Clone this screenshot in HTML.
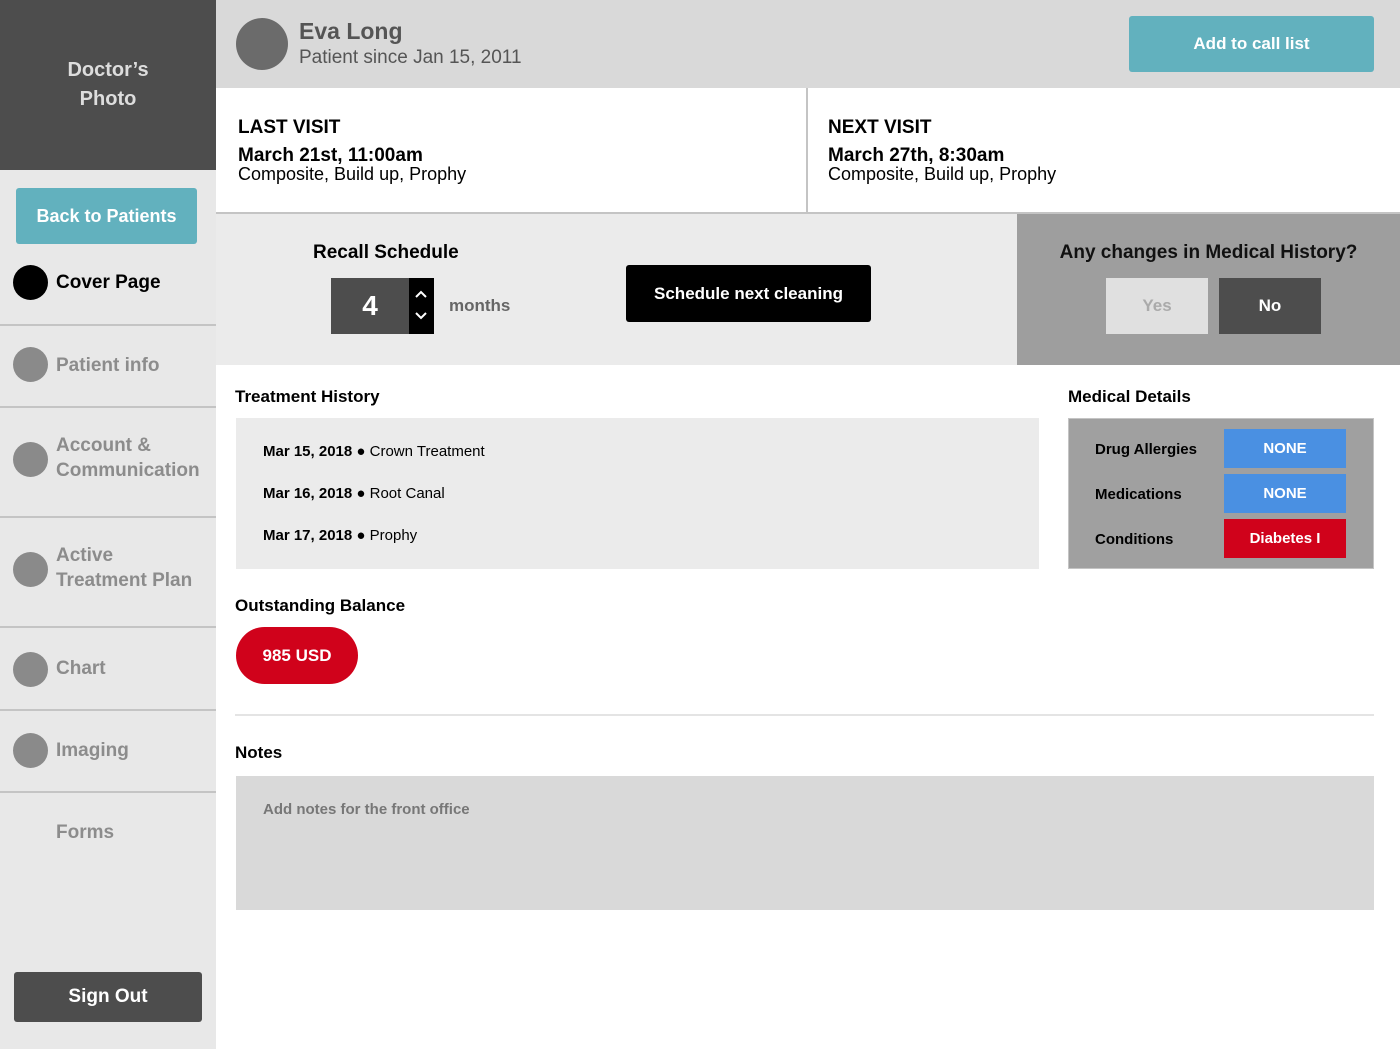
<!DOCTYPE html>
<html><head><meta charset="utf-8"><style>
*{margin:0;padding:0;box-sizing:border-box}
body{width:1400px;height:1049px;position:relative;background:#fff;font-family:"Liberation Sans",sans-serif;overflow:hidden}
.a{position:absolute}
.b{font-weight:bold}
.side{left:0;top:0;width:216px;height:1049px;background:#e8e8e8}
.nav{left:0;width:216px;border-top:2px solid #c4c4c4}
.dot{position:absolute;left:13px;width:35px;height:35px;border-radius:50%;background:#8a8a8a}
.nl{position:absolute;left:56px;color:#8c8c8c;font-weight:bold;font-size:19px;line-height:25px}
.c{display:flex;align-items:center;justify-content:center}
</style></head><body>
<div class="a side"></div>
<div class="a c b" style="left:0;top:0;width:216px;height:170px;background:#4d4d4d;color:#ddd;font-size:20px;line-height:29px;text-align:center">Doctor’s<br>Photo</div>
<div class="a c b" style="left:16px;top:188px;width:181px;height:56px;background:#62b1be;border-radius:3px;color:#fff;font-size:18px">Back to Patients</div>
<div class="dot" style="top:265px;background:#000"></div><div class="nl" style="top:270px;color:#000">Cover Page</div>
<div class="a nav" style="top:324px"></div>
<div class="dot" style="top:347px"></div><div class="nl" style="top:353px">Patient info</div>
<div class="a nav" style="top:406px"></div>
<div class="dot" style="top:442px"></div><div class="nl" style="top:433px">Account &amp;<br>Communication</div>
<div class="a nav" style="top:516px"></div>
<div class="dot" style="top:552px"></div><div class="nl" style="top:543px">Active<br>Treatment Plan</div>
<div class="a nav" style="top:626px"></div>
<div class="dot" style="top:652px"></div><div class="nl" style="top:656px">Chart</div>
<div class="a nav" style="top:709px"></div>
<div class="dot" style="top:733px"></div><div class="nl" style="top:738px">Imaging</div>
<div class="a nav" style="top:791px"></div>
<div class="nl" style="top:820px">Forms</div>
<div class="a c b" style="left:14px;top:972px;width:188px;height:50px;background:#4d4d4d;border-radius:3px;color:#fff;font-size:19px">Sign Out</div>

<div class="a" style="left:216px;top:0;width:1184px;height:88px;background:#d9d9d9"></div>
<div class="a" style="left:236px;top:18px;width:52px;height:52px;border-radius:50%;background:#6b6b6b"></div>
<div class="a" style="left:299px;top:18px;font-size:23px;color:#555;font-weight:bold">Eva Long</div>
<div class="a" style="left:299px;top:47px;font-size:19px;color:#555">Patient since Jan 15, 2011</div>
<div class="a c b" style="left:1129px;top:16px;width:245px;height:56px;background:#62b1be;border-radius:3px;color:#fff;font-size:17px">Add to call list</div>

<div class="a" style="left:216px;top:88px;width:1184px;height:126px;border-bottom:2px solid #c4c4c4"></div>
<div class="a" style="left:806px;top:88px;width:2px;height:126px;background:#c4c4c4"></div>
<div class="a" style="left:238px;top:116px;font-size:19px;line-height:23px"><b>LAST VISIT</b><br><b style="display:block;margin-top:5px">March 21st, 11:00am</b><span style="display:block;margin-top:-4px;font-size:18px">Composite, Build up, Prophy</span></div>
<div class="a" style="left:828px;top:116px;font-size:19px;line-height:23px"><b>NEXT VISIT</b><br><b style="display:block;margin-top:5px">March 27th, 8:30am</b><span style="display:block;margin-top:-4px;font-size:18px">Composite, Build up, Prophy</span></div>

<div class="a" style="left:216px;top:214px;width:801px;height:151px;background:#ebebeb"></div>
<div class="a b" style="left:313px;top:242px;font-size:19px">Recall Schedule</div>
<div class="a c b" style="left:331px;top:278px;width:78px;height:56px;background:#4d4d4d;color:#fff;font-size:28px">4</div>
<div class="a" style="left:409px;top:278px;width:25px;height:56px;background:#000">
<svg width="25" height="56"><path d="M7 19l5-5 5 5M7 35l5 5 5-5" stroke="#fff" stroke-width="2" fill="none"/></svg></div>
<div class="a b" style="left:449px;top:296px;font-size:17px;color:#666">months</div>
<div class="a c b" style="left:626px;top:265px;width:245px;height:57px;background:#000;border-radius:3px;color:#fff;font-size:17px">Schedule next cleaning</div>

<div class="a" style="left:1017px;top:214px;width:383px;height:151px;background:#9e9e9e"></div>
<div class="a b" style="left:1017px;top:242px;width:383px;text-align:center;font-size:19px;color:#111">Any changes in Medical History?</div>
<div class="a c b" style="left:1106px;top:278px;width:102px;height:56px;background:#e0e0e0;color:#aaa;font-size:17px">Yes</div>
<div class="a c b" style="left:1219px;top:278px;width:102px;height:56px;background:#4d4d4d;color:#fff;font-size:17px">No</div>

<div class="a b" style="left:235px;top:387px;font-size:17px">Treatment History</div>
<div class="a" style="left:236px;top:418px;width:803px;height:151px;background:#ebebeb"></div>
<div class="a" style="left:263px;top:431px;font-size:15px;line-height:42px">
<div><b>Mar 15, 2018</b> ● Crown Treatment</div>
<div><b>Mar 16, 2018</b> ● Root Canal</div>
<div><b>Mar 17, 2018</b> ● Prophy</div></div>

<div class="a b" style="left:1068px;top:387px;font-size:17px">Medical Details</div>
<div class="a" style="left:1068px;top:418px;width:306px;height:151px;background:#a0a0a0;border:1px solid #c4c4c4"></div>
<div class="a b" style="left:1095px;top:427px;font-size:15px;line-height:45px">Drug Allergies<br>Medications<br>Conditions</div>
<div class="a c b" style="left:1224px;top:429px;width:122px;height:39px;background:#4a90e2;color:#fff;font-size:15px">NONE</div>
<div class="a c b" style="left:1224px;top:474px;width:122px;height:39px;background:#4a90e2;color:#fff;font-size:15px">NONE</div>
<div class="a c b" style="left:1224px;top:519px;width:122px;height:39px;background:#d0021b;color:#fff;font-size:15px">Diabetes I</div>

<div class="a b" style="left:235px;top:596px;font-size:17px">Outstanding Balance</div>
<div class="a c b" style="left:236px;top:627px;width:122px;height:57px;border-radius:29px;background:#d0021b;color:#fff;font-size:17px">985 USD</div>
<div class="a" style="left:235px;top:714px;width:1139px;height:2px;background:#e4e4e4"></div>
<div class="a b" style="left:235px;top:743px;font-size:17px">Notes</div>
<div class="a" style="left:236px;top:776px;width:1138px;height:134px;background:#d9d9d9"></div>
<div class="a b" style="left:263px;top:801px;font-size:15px;color:#777">Add notes for the front office</div>
</body></html>
